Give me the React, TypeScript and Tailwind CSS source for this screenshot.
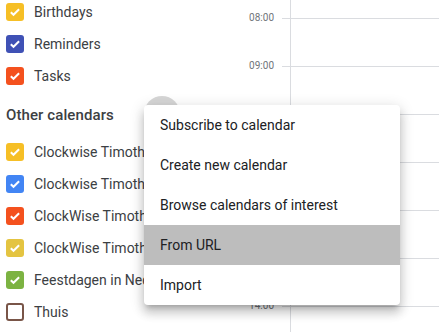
import React from 'react';

const myCalendars = [
  { label: 'Birthdays', color: '#f6bf26', checked: true },
  { label: 'Reminders', color: '#3f51b5', checked: true },
  { label: 'Tasks', color: '#f4511e', checked: true },
];

const otherCalendars = [
  { label: 'Clockwise Timothy Huisman', color: '#f6bf26', checked: true },
  { label: 'Clockwise Timothy Werk', color: '#4285f4', checked: true },
  { label: 'ClockWise Timothy Sport', color: '#f4511e', checked: true },
  { label: 'ClockWise Timothy Focus', color: '#e4c441', checked: true },
  { label: 'Feestdagen in Nederland', color: '#7cb342', checked: true },
  { label: 'Thuis', color: '#795548', checked: false },
];

const hours = ['08:00', '09:00', '10:00', '11:00', '12:00', '13:00', '14:00'];

const menuItems = [
  'Subscribe to calendar',
  'Create new calendar',
  'Browse calendars of interest',
  'From URL',
  'Import',
];

function CalendarRow({ label, color, checked }: { label: string; color: string; checked: boolean }) {
  return (
    <div className="flex h-8 items-center gap-[10px] pl-[6px] whitespace-nowrap">
      {checked ? (
        <div className="flex h-[18px] w-[18px] shrink-0 items-center justify-center rounded-[3px]" style={{ backgroundColor: color }}>
          <svg width="18" height="18" viewBox="0 0 18 18" fill="none">
            <path d="M4.8 9.2l2.7 2.6 5.6-5.6" stroke="#fff" strokeWidth="2" />
          </svg>
        </div>
      ) : (
        <div className="h-[18px] w-[18px] shrink-0 rounded-[3px] border-2" style={{ borderColor: color }} />
      )}
      <span className="text-[14px] text-[#3c4043]">{label}</span>
    </div>
  );
}

export default function App() {
  return (
    <div className="relative flex h-[332px] w-[439px] overflow-hidden bg-white font-['Roboto',sans-serif]">
      <aside className="-mt-1 w-[240px] shrink-0">
        {myCalendars.map((c) => (
          <CalendarRow key={c.label} {...c} />
        ))}
        <div className="flex h-[44px] w-[180px] items-center pl-[6px]">
          <span className="flex-1 pt-[3px] text-[15px] font-medium tracking-[0.1px] text-[#3c4043]">Other calendars</span>
          <div className="h-9 w-9 rounded-full bg-[#d6d6d6]" />
        </div>
        {otherCalendars.map((c) => (
          <CalendarRow key={c.label} {...c} />
        ))}
      </aside>

      <div className="flex flex-1">
        <div className="w-[50px] shrink-0 pt-[18px]">
          {hours.map((h) => (
            <div key={h} className="flex h-12 items-start">
              <span className="w-[34px] -translate-y-1/2 text-right text-[10px] leading-[12px] text-[#70757a]">{h}</span>
              <div className="ml-2 w-2 border-t border-[#dadce0]" />
            </div>
          ))}
        </div>
        <div className="flex-1 border-l border-[#dadce0] pt-[18px]">
          {hours.map((h) => (
            <div key={h} className="h-12 border-t border-[#dadce0]" />
          ))}
        </div>
      </div>

      <div className="absolute left-[144px] top-[105px] w-[256px] rounded-[4px] bg-white shadow-[0_5px_5px_-3px_rgba(0,0,0,0.2),0_8px_10px_1px_rgba(0,0,0,0.14),0_3px_14px_2px_rgba(0,0,0,0.12)]">
        {menuItems.map((item) => (
          <div
            key={item}
            className={`flex h-10 items-center px-4 text-[14px] text-[#202124] ${item === 'From URL' ? 'bg-[#bdbdbd]' : ''}`}
          >
            {item}
          </div>
        ))}
      </div>
    </div>
  );
}
